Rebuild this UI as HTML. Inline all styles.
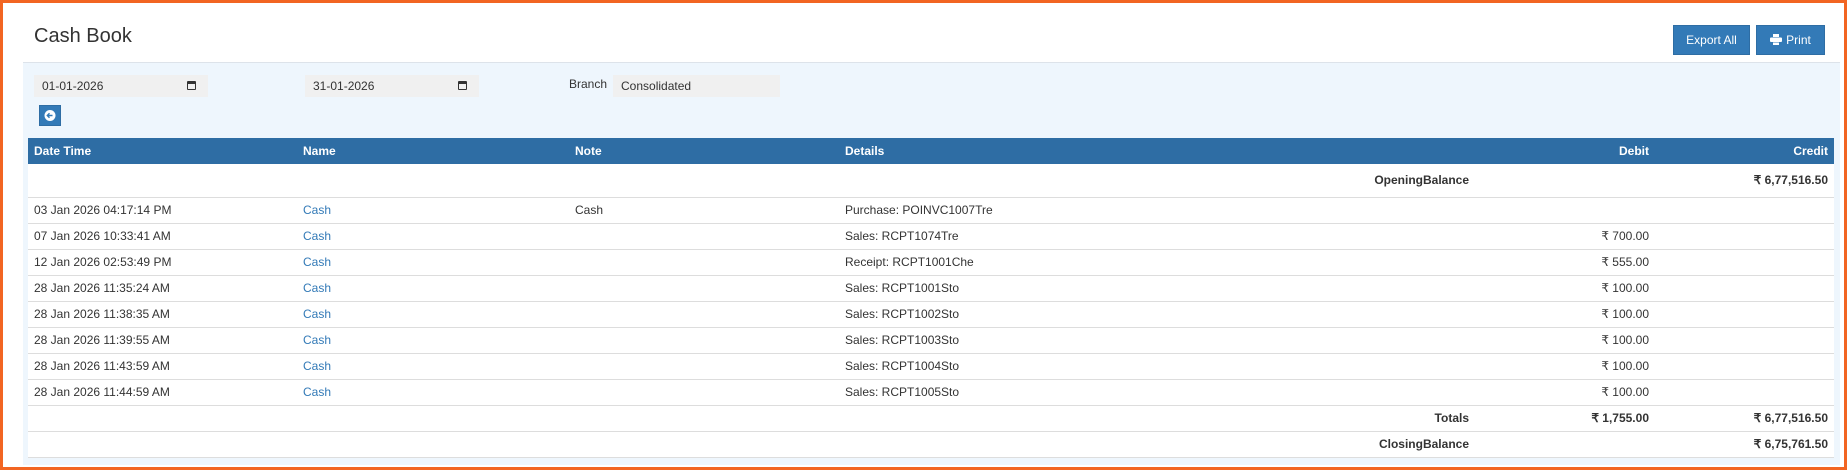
<!DOCTYPE html>
<html><head><meta charset="utf-8"><style>
*{box-sizing:border-box;margin:0;padding:0}
body{width:1847px;height:470px;background:#fff;font-family:"Liberation Sans",sans-serif;font-size:12px;color:#333;position:relative;overflow:hidden}
.frame{position:absolute;left:0;top:0;width:1847px;height:470px;border:3px solid #f26522}
.title{position:absolute;left:34px;top:25px;font-size:20px;color:#333}
.btn{position:absolute;top:25px;height:30px;background:#337ab7;border:1px solid #2e6da4;color:#fff;font-size:12px;line-height:28px;text-align:center}
.hdrline{position:absolute;left:23px;top:62px;width:1817px;height:1px;background:#dde3ea}
.panel{position:absolute;left:23px;top:63px;width:1817px;height:402px;background:#eef6fd}
.inp{position:absolute;top:75px;height:22px;background:#f0f0f0;font-size:12px;line-height:22px;padding-left:8px;color:#333}
.cal{position:absolute;right:12px;top:6px;width:9px;height:9px;border:1.5px solid #333;border-top-width:3px;border-radius:1px}
.back{position:absolute;left:39px;top:105px;width:22px;height:21px;background:#337ab7;border:1px solid #2e6da4}
table{position:absolute;left:28px;top:138px;width:1806px;border-collapse:collapse;background:#fff;table-layout:fixed}
th{background:#2e6da4;color:#fff;font-weight:bold;height:26px;text-align:left;padding:0 6px;font-size:12px}
td{height:26px;border-bottom:1px solid #ddd;padding:0 6px;font-size:12px}
.r{text-align:right}
.b{font-weight:bold}
a{color:#337ab7;text-decoration:none}
</style></head><body>
<div class="panel"></div>
<div class="hdrline"></div>
<div class="title">Cash Book</div>
<div class="btn" style="left:1673px;width:77px">Export All</div>
<div class="btn" style="left:1756px;width:69px"><svg width="12" height="11" viewBox="0 0 12 11" style="vertical-align:-1px;margin-right:4px"><rect x="3" y="0" width="6" height="3" fill="#fff"/><rect x="0" y="3.5" width="12" height="4.5" rx="1" fill="#fff"/><rect x="3" y="8.5" width="6" height="2.5" fill="#fff"/></svg>Print</div>
<div class="inp" style="left:34px;width:174px">01-01-2026<div class="cal"></div></div>
<div class="inp" style="left:305px;width:174px">31-01-2026<div class="cal"></div></div>
<div style="position:absolute;left:569px;top:77px;font-size:12px">Branch</div>
<div class="inp" style="left:613px;width:167px">Consolidated</div>
<div class="back"><svg width="20" height="19" viewBox="0 0 20 19"><circle cx="10" cy="9.5" r="5.5" fill="#fff"/><path d="M12.5 9.5H7.5M9.5 7.3L7.3 9.5L9.5 11.7" stroke="#337ab7" stroke-width="1.4" fill="none"/></svg></div>
<table>
<colgroup><col style="width:269px"><col style="width:272px"><col style="width:270px"><col style="width:636px"><col style="width:180px"><col style="width:179px"></colgroup>
<tr><th>Date Time</th><th>Name</th><th>Note</th><th>Details</th><th class="r">Debit</th><th class="r">Credit</th></tr>
<tr><td style="height:33px"></td><td></td><td></td><td class="r b">OpeningBalance</td><td></td><td class="r b">₹ 6,77,516.50</td></tr>
<tr><td>03 Jan 2026 04:17:14 PM</td><td><a>Cash</a></td><td>Cash</td><td>Purchase: POINVC1007Tre</td><td></td><td></td></tr>
<tr><td>07 Jan 2026 10:33:41 AM</td><td><a>Cash</a></td><td></td><td>Sales: RCPT1074Tre</td><td class="r">₹ 700.00</td><td></td></tr>
<tr><td>12 Jan 2026 02:53:49 PM</td><td><a>Cash</a></td><td></td><td>Receipt: RCPT1001Che</td><td class="r">₹ 555.00</td><td></td></tr>
<tr><td>28 Jan 2026 11:35:24 AM</td><td><a>Cash</a></td><td></td><td>Sales: RCPT1001Sto</td><td class="r">₹ 100.00</td><td></td></tr>
<tr><td>28 Jan 2026 11:38:35 AM</td><td><a>Cash</a></td><td></td><td>Sales: RCPT1002Sto</td><td class="r">₹ 100.00</td><td></td></tr>
<tr><td>28 Jan 2026 11:39:55 AM</td><td><a>Cash</a></td><td></td><td>Sales: RCPT1003Sto</td><td class="r">₹ 100.00</td><td></td></tr>
<tr><td>28 Jan 2026 11:43:59 AM</td><td><a>Cash</a></td><td></td><td>Sales: RCPT1004Sto</td><td class="r">₹ 100.00</td><td></td></tr>
<tr><td>28 Jan 2026 11:44:59 AM</td><td><a>Cash</a></td><td></td><td>Sales: RCPT1005Sto</td><td class="r">₹ 100.00</td><td></td></tr>
<tr><td></td><td></td><td></td><td class="r b">Totals</td><td class="r b">₹ 1,755.00</td><td class="r b">₹ 6,77,516.50</td></tr>
<tr><td></td><td></td><td></td><td class="r b">ClosingBalance</td><td></td><td class="r b">₹ 6,75,761.50</td></tr>
</table>
<div class="frame"></div>
</body></html>
